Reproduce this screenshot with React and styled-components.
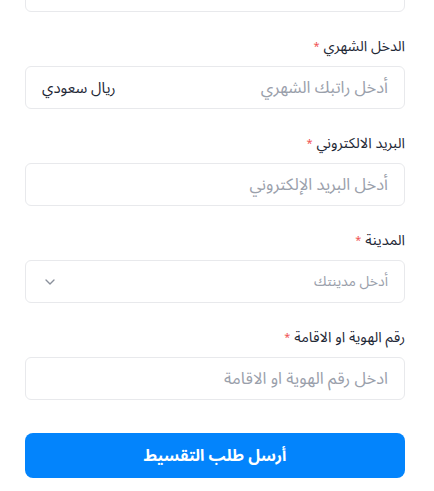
import React from 'react';
import styled, { createGlobalStyle } from 'styled-components';

const Global = createGlobalStyle`
  html, body {
    margin: 0;
    padding: 0;
    background: #ffffff;
    overflow: hidden;
  }
  body {
    font-family: "Noto Sans Arabic", "DejaVu Sans", "Noto Sans", sans-serif;
  }
`;

const Form = styled.form`
  direction: rtl;
  width: 380px;
  margin: -31px auto 0;
  padding: 0 29px 0 25px;
  box-sizing: content-box;
  display: flex;
  flex-direction: column;
`;

const Field = styled.div`
  display: flex;
  flex-direction: column;
  margin-top: ${p => (p.first ? 0 : 25)}px;
`;

const Label = styled.label`
  height: 20px;
  line-height: 20px;
  font-size: 14.5px;
  color: #1f2937;
  margin-bottom: 9px;

  span {
    color: #f05252;
    margin-right: 4px;
    font-size: 11px;
    vertical-align: top;
  }
`;

const Box = styled.div`
  height: 43px;
  box-sizing: border-box;
  border: 1px solid #e8e9ec;
  border-radius: 6px;
  background: #fff;
  display: flex;
  align-items: center;
  justify-content: space-between;
  padding: 0 16px 0 16px;
`;

const Input = styled.input`
  flex: 1;
  min-width: 0;
  border: none;
  outline: none;
  background: transparent;
  direction: rtl;
  font-family: inherit;
  font-size: ${p => p.small ? 14 : 16.5}px;
  color: #1f2937;
  padding: 0;

  &::placeholder {
    color: #9aa0ab;
  }
`;

const Unit = styled.span`
  font-size: 15px;
  color: #1f2937;
  white-space: nowrap;
`;

const Chevron = styled.svg`
  width: 16px;
  height: 16px;
  color: #8a909b;
  flex: none;
`;

const Submit = styled.button`
  margin-top: 33px;
  height: 45px;
  border: none;
  border-radius: 8px;
  background: #0384fc;
  color: #fff;
  font-family: inherit;
  font-weight: 700;
  font-size: 16px;
  cursor: pointer;
`;

const fields = [
  { label: 'الدخل الشهري', placeholder: 'أدخل راتبك الشهري', unit: 'ريال سعودي' },
  { label: 'البريد الالكتروني', placeholder: 'أدخل البريد الإلكتروني' },
  { label: 'المدينة', placeholder: 'أدخل مدينتك', select: true },
  { label: 'رقم الهوية او الاقامة', placeholder: 'ادخل رقم الهوية او الاقامة' },
];

export default function App() {
  return (
    <>
      <Global />
      <Form onSubmit={e => e.preventDefault()}>
        <Field first>
          <Box />
        </Field>
        {fields.map(f => (
          <Field key={f.label}>
            <Label>{f.label}<span>*</span></Label>
            <Box>
              <Input placeholder={f.placeholder} small={f.select} />
              {f.unit && <Unit>{f.unit}</Unit>}
              {f.select && (
                <Chevron viewBox="0 0 24 24" fill="none" stroke="currentColor" strokeWidth="2" strokeLinecap="round" strokeLinejoin="round">
                  <path d="M6 9l6 6 6-6" />
                </Chevron>
              )}
            </Box>
          </Field>
        ))}
        <Submit type="submit">أرسل طلب التقسيط</Submit>
      </Form>
    </>
  );
}
